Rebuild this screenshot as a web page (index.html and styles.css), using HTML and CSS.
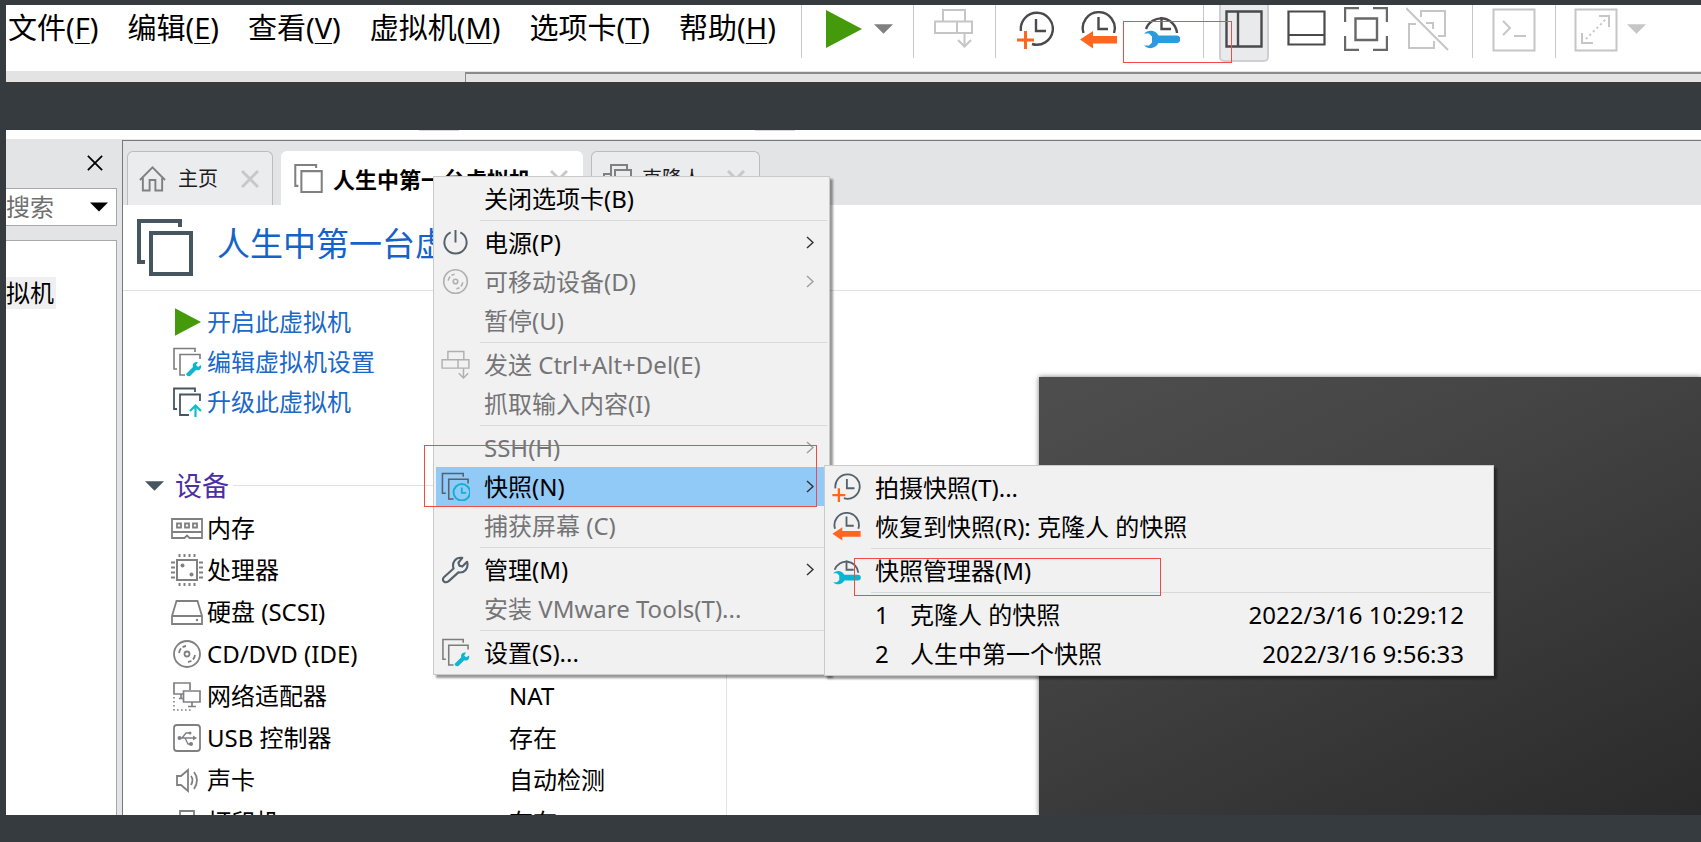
FILE: index.html
```html
<!DOCTYPE html>
<html lang="zh-CN">
<head>
<meta charset="utf-8">
<title>虚拟机快照</title>
<link rel="stylesheet" href="styles.css">
</head>
<body>
<svg class="defs" aria-hidden="true">
  <symbol id="i-play" viewBox="0 0 36 38"><path d="M0 0L36 19L0 38Z" fill="#459a0b"/></symbol>
  <symbol id="i-drop" viewBox="0 0 20 10"><path d="M0 0H20L10 10Z" fill="currentColor"/></symbol>
  <symbol id="i-send" viewBox="0 0 39 40"><g fill="none" stroke="currentColor" stroke-width="2"><path d="M9 13V2H31V13M1 13.500H38V25H1ZM23 13V25M30.500 25V38M24 32L30.500 38.500L37 32"/></g></symbol>
  <symbol id="i-snap-add" viewBox="0 0 37 38"><g fill="none" stroke="currentColor" stroke-width="2.400"><path d="M4 20A16 16 0 1 1 15 33"/><path d="M19 8V20H29"/></g><path d="M0 29H17M8.500 20V38" stroke="#ff671f" stroke-width="3" fill="none"/></symbol>
  <symbol id="i-snap-back" viewBox="0 0 37 38"><g fill="none" stroke="currentColor" stroke-width="2.400"><path d="M3.500 22A16 16 0 1 1 34 22"/><path d="M18.500 6V18H28"/></g><path d="M0 28.500L13 20V25H37V32.500H13V37.500Z" fill="#ff671f"/></symbol>
  <symbol id="i-snap-mgr" viewBox="0 0 37 38"><g fill="none" stroke="currentColor" stroke-width="2.400"><path d="M3 18A16 16 0 0 1 34 22"/><path d="M18.500 6V18H28"/></g><path class="wrench-fill" d="M1 22.500A9 9 0 0 1 15.500 24.500H33.500A3.700 3.700 0 0 1 33.500 32H15.500A9 9 0 0 1 1 34.500H6L9 31.500V25.500L6 22.500Z"/></symbol>
  <symbol id="i-side" viewBox="0 0 38 38"><path d="M1.500 1.500H36.500V36.500H1.500ZM13 1V37" fill="none" stroke="currentColor" stroke-width="2.400"/></symbol>
  <symbol id="i-bottom" viewBox="0 0 39 36"><path d="M1.500 1.500H37.500V34.500H1.500ZM1 25H38" fill="none" stroke="currentColor" stroke-width="2.200"/></symbol>
  <symbol id="i-full" viewBox="0 0 44 44"><path d="M1 15V1H15M29 1H43V15M43 29V43H29M15 43H1V29M11.500 11.500H33V33H11.500Z" fill="none" stroke="currentColor" stroke-width="2.400"/></symbol>
  <symbol id="i-unity" viewBox="0 0 44 44"><path d="M15 10V4H39V29H32M10 17H3V41H28V34M20 16H27V22M0 1L42 43" fill="none" stroke="currentColor" stroke-width="2"/></symbol>
  <symbol id="i-term" viewBox="0 0 44 44"><path d="M1.500 1.500H42.500V42.500H1.500ZM11 13L18 20L11 27M22 28H34" fill="none" stroke="currentColor" stroke-width="2"/></symbol>
  <symbol id="i-stretch" viewBox="0 0 44 44"><path d="M1.500 1.500H42.500V42.500H1.500ZM25 8H35V19M8 25V35H19" fill="none" stroke="currentColor" stroke-width="2"/><path d="M12 31L32 11" stroke="currentColor" stroke-width="2" stroke-dasharray="2 3"/></symbol>
  <symbol id="i-x" viewBox="0 0 18 18"><path d="M1 1L17 17M17 1L1 17" stroke="currentColor" fill="none" stroke-width="var(--w,2)"/></symbol>
  <symbol id="i-home" viewBox="0 0 28 26"><path d="M1 14L14 1L27 14M4 12V25H11V14H17V25H24V12" fill="none" stroke="currentColor" stroke-width="2"/></symbol>
  <symbol id="i-vm" viewBox="0 0 56 57"><path d="M43 8V2H2V43H8M14 14H54V55H14Z" fill="none" stroke="currentColor" stroke-width="4"/></symbol>
  <symbol id="i-clone" viewBox="0 0 29 29"><path d="M8 27V1H24V7M12 6H28V24H12ZM8 10H1V27H12" fill="none" stroke="currentColor" stroke-width="2"/></symbol>
  <symbol id="i-edit" viewBox="0 0 30 30"><path d="M23 5V1.500H2V22H5M28 12V7.500H8V28H13" fill="none" stroke="currentColor" stroke-width="1.600"/><path d="M14 27L21 20C20 17 22 14.500 26 15L24 18L26 20L29 18C30 22 27 24 24 23L18 29Q15 30 14 27Z" fill="#0cb6d0"/></symbol>
  <symbol id="i-upgrade" viewBox="0 0 30 30"><path d="M23 5V1.500H2V22H5M28 14V7.500H8V28H17" fill="none" stroke="currentColor" stroke-width="1.800"/><path d="M23.500 30V19M18 24L23.500 18.500L29 24" fill="none" stroke="#0cc0cc" stroke-width="2.200"/></symbol>
  <symbol id="i-snap" viewBox="0 0 30 30"><path d="M23 5V1.500H1.500V22H5M28 12V7.500H8V28H13" fill="none" stroke="currentColor" stroke-width="1.600"/><circle cx="21.500" cy="21" r="8.500" fill="none" stroke="#12b0d2" stroke-width="2"/><path d="M21.500 16V21.500H26" fill="none" stroke="#12b0d2" stroke-width="1.800"/></symbol>
  <symbol id="i-mem" viewBox="0 0 32 32"><g fill="none" stroke="currentColor" stroke-width="1.800"><path d="M1 7H31V26H18.500L16 23.500L13.500 26H1ZM1 20H31M6 11.500H10V15.500H6ZM14 11.500H18V15.500H14ZM22 11.500H26V15.500H22Z"/></g></symbol>
  <symbol id="i-cpu" viewBox="0 0 32 32"><path d="M6 6H26V26H6Z" fill="none" stroke="currentColor" stroke-width="2"/><path d="M8.500 0V3M13.500 0V3M18.500 0V3M23.500 0V3M8.500 29V32M13.500 29V32M18.500 29V32M23.500 29V32M0 8.500H4M0 13.500H4M0 18.500H4M0 23.500H4M28 8.500H32M28 13.500H32M28 18.500H32M28 23.500H32" stroke="currentColor" stroke-width="2"/><circle cx="11.500" cy="11.500" r="2" fill="currentColor"/><circle cx="20.500" cy="20.500" r="2" fill="currentColor"/></symbol>
  <symbol id="i-disk" viewBox="0 0 32 32"><path d="M1 20L5.500 5H26.500L31 20V28H1ZM1 20H31" fill="none" stroke="currentColor" stroke-width="1.800"/><circle cx="26" cy="24" r="1.200" fill="currentColor"/></symbol>
  <symbol id="i-cd" viewBox="0 0 32 32"><g fill="none" stroke="currentColor" stroke-width="1.800"><circle cx="16" cy="16" r="13"/><circle cx="16" cy="16" r="2.500"/><path d="M8 15Q9 9 15 8M24 17Q23 23 17 24" stroke-dasharray="5 2"/></g></symbol>
  <symbol id="i-net" viewBox="0 0 32 32"><path d="M12 14H3V3H19V10M12.500 11H29V22H12.500ZM21 22V26M17 26.500H25M8 18.500H12M10 14V18" fill="none" stroke="currentColor" stroke-width="1.700"/><path d="M3 17V30H22" fill="none" stroke="currentColor" stroke-width="1.600" stroke-dasharray="1.600 2.400"/></symbol>
  <symbol id="i-usb" viewBox="0 0 32 32"><rect x="3" y="3" width="26" height="26" rx="3" fill="none" stroke="currentColor" stroke-width="1.800"/><path d="M8 16H24M11 16L15 11H18M14 16L17 22H20" fill="none" stroke="currentColor" stroke-width="1.400"/><circle cx="8.500" cy="16" r="2" fill="currentColor"/><circle cx="20" cy="22" r="2" fill="currentColor"/><circle cx="19" cy="11" r="1.500" fill="currentColor"/><path d="M22 13.500L26 16L22 18.500Z" fill="currentColor"/></symbol>
  <symbol id="i-sound" viewBox="0 0 32 32"><path d="M6 12H10L17 6V27L10 21H6ZM20 12Q23 16 20 21M23 8Q29 16 23 25" fill="none" stroke="currentColor" stroke-width="1.800"/></symbol>
  <symbol id="i-print" viewBox="0 0 32 32"><path d="M9 12V5H23V12M3 12H29V23H3ZM9 18H23V29H9Z" fill="none" stroke="currentColor" stroke-width="1.800"/></symbol>
  <symbol id="i-power" viewBox="0 0 30 30"><path d="M10 4.500A11.500 11.500 0 1 0 20 4.500M15 2V15" fill="none" stroke="currentColor" stroke-width="2"/></symbol>
  <symbol id="i-wrench" viewBox="0 0 30 30"><path d="M3 23L13 14C11 8 15 2 22 3L18 8L19 11L22 12L27 7C29 14 24 19 18 18L8 27C4 30 0 26 3 23Z" fill="none" stroke="currentColor" stroke-width="2.200" stroke-linejoin="round"/></symbol>
  <symbol id="i-chev" viewBox="0 0 8 13"><path d="M1 1L7 6.500L1 12" fill="none" stroke="currentColor" stroke-width="1.500"/></symbol>
</svg>

<header class="topbar">
  <div class="topbar-row">
    <nav class="menubar">
      <button>文件(<u>F</u>)</button>
      <button>编辑(<u>E</u>)</button>
      <button>查看(<u>V</u>)</button>
      <button>虚拟机(<u>M</u>)</button>
      <button>选项卡(<u>T</u>)</button>
      <button>帮助(<u>H</u>)</button>
    </nav>
    <div class="tools">
      <div class="group g-play">
        <button aria-label="开启"><svg class="t-play"><use href="#i-play"/></svg></button>
        <button class="mid" aria-label="电源选项"><svg class="t-drop"><use href="#i-drop"/></svg></button>
      </div>
      <div class="group g-send"><button class="off" aria-label="发送"><svg class="t-send"><use href="#i-send"/></svg></button></div>
      <div class="group g-snap">
        <button aria-label="拍摄快照"><svg class="t-snap"><use href="#i-snap-add"/></svg></button>
        <button aria-label="恢复快照"><svg class="t-snap"><use href="#i-snap-back"/></svg></button>
        <button class="blue" aria-label="快照管理器"><svg class="t-snap"><use href="#i-snap-mgr"/></svg></button>
      </div>
      <div class="group g-view">
        <button class="pressed" aria-label="侧栏"><svg class="t-side"><use href="#i-side"/></svg></button>
        <button class="low" aria-label="缩略图栏"><svg class="t-bottom"><use href="#i-bottom"/></svg></button>
        <button class="soft" aria-label="全屏"><svg class="t-box"><use href="#i-full"/></svg></button>
        <button class="off" aria-label="Unity"><svg class="t-box"><use href="#i-unity"/></svg></button>
      </div>
      <div class="group g-term"><button class="off" aria-label="控制台"><svg class="t-box"><use href="#i-term"/></svg></button></div>
      <div class="group g-fit">
        <button class="off" aria-label="拉伸"><svg class="t-box"><use href="#i-stretch"/></svg></button>
        <button class="off" aria-label="拉伸选项"><svg class="t-drop"><use href="#i-drop"/></svg></button>
      </div>
    </div>
  </div>
  <div class="topbar-foot"><div class="foot-edge"></div></div>
  <div class="mark mark-tool"></div>
</header>

<main class="window">
  <div class="window-top"></div>
  <div class="columns">
    <aside class="library">
      <div class="library-head"><button aria-label="关闭库"><svg class="x-thin"><use href="#i-x"/></svg></button></div>
      <div class="search">
        <input type="text" aria-label="搜索" placeholder="搜索">
        <button aria-label="搜索选项"><svg class="s-drop"><use href="#i-drop"/></svg></button>
      </div>
      <div class="tree"><span>拟机</span></div>
    </aside>
    <section class="work">
      <div class="tabs">
        <div class="tab tab-home"><svg class="home"><use href="#i-home"/></svg><span>主页</span><button aria-label="关闭"><svg class="x-tab"><use href="#i-x"/></svg></button></div>
        <div class="tab tab-vm"><svg class="tab-icon"><use href="#i-vm"/></svg><span>人生中第一台虚拟机</span><button aria-label="关闭"><svg class="x-tab"><use href="#i-x"/></svg></button></div>
        <div class="tab tab-clone"><svg class="tab-icon"><use href="#i-clone"/></svg><span>克隆人</span><button aria-label="关闭"><svg class="x-tab"><use href="#i-x"/></svg></button></div>
      </div>
      <div class="title"><svg><use href="#i-vm"/></svg><h1>人生中第一台虚拟机</h1></div>
      <div class="body">
        <div class="details">
          <ul class="actions">
            <li><svg class="a-play"><use href="#i-play"/></svg><a href="#">开启此虚拟机</a></li>
            <li><svg><use href="#i-edit"/></svg><a href="#">编辑虚拟机设置</a></li>
            <li><svg class="slate"><use href="#i-upgrade"/></svg><a href="#">升级此虚拟机</a></li>
          </ul>
          <h2><svg><use href="#i-drop"/></svg>设备</h2>
          <table class="devices">
            <tr><th scope="row"><svg><use href="#i-mem"/></svg>内存</th><td></td></tr>
            <tr><th scope="row"><svg><use href="#i-cpu"/></svg>处理器</th><td></td></tr>
            <tr><th scope="row"><svg><use href="#i-disk"/></svg>硬盘 (SCSI)</th><td></td></tr>
            <tr><th scope="row"><svg><use href="#i-cd"/></svg>CD/DVD (IDE)</th><td></td></tr>
            <tr><th scope="row"><svg><use href="#i-net"/></svg>网络适配器</th><td>NAT</td></tr>
            <tr><th scope="row"><svg><use href="#i-usb"/></svg>USB 控制器</th><td>存在</td></tr>
            <tr><th scope="row"><svg><use href="#i-sound"/></svg>声卡</th><td>自动检测</td></tr>
            <tr><th scope="row"><svg><use href="#i-print"/></svg>打印机</th><td>存在</td></tr>
          </table>
        </div>
        <div class="preview"></div>
      </div>
    </section>
  </div>

  <div class="popup context">
    <button><i></i>关闭选项卡(B)</button>
    <hr>
    <button><i><svg><use href="#i-power"/></svg></i>电源(P)<svg class="chev"><use href="#i-chev"/></svg></button>
    <button disabled><i><svg><use href="#i-cd"/></svg></i>可移动设备(D)<svg class="chev"><use href="#i-chev"/></svg></button>
    <button disabled><i></i>暂停(U)</button>
    <hr>
    <button disabled><i><svg class="bold"><use href="#i-send"/></svg></i>发送 Ctrl+Alt+Del(E)</button>
    <button disabled><i></i>抓取输入内容(I)</button>
    <hr>
    <button disabled><i></i>SSH(H)<svg class="chev"><use href="#i-chev"/></svg></button>
    <button class="active"><i><svg><use href="#i-snap"/></svg></i>快照(N)<svg class="chev"><use href="#i-chev"/></svg></button>
    <button disabled><i></i>捕获屏幕 (C)</button>
    <hr>
    <button><i><svg><use href="#i-wrench"/></svg></i>管理(M)<svg class="chev"><use href="#i-chev"/></svg></button>
    <button disabled><i></i>安装 VMware Tools(T)...</button>
    <hr>
    <button><i><svg class="grey"><use href="#i-edit"/></svg></i>设置(S)...</button>
  </div>

  <div class="popup submenu">
    <button><i><svg><use href="#i-snap-add"/></svg></i>拍摄快照(T)...</button>
    <button><i><svg><use href="#i-snap-back"/></svg></i>恢复到快照(R): 克隆人 的快照</button>
    <hr>
    <button><i><svg><use href="#i-snap-mgr"/></svg></i>快照管理器(M)</button>
    <hr>
    <button><i></i><b>1</b>克隆人 的快照<time>2022/3/16 10:29:12</time></button>
    <button><i></i><b>2</b>人生中第一个快照<time>2022/3/16 9:56:33</time></button>
  </div>
  <div class="mark mark-snap"></div>
  <div class="mark mark-mgr"></div>
</main>
</body>
</html>
```
FILE: styles.css
```css
* { box-sizing: border-box; }
body {
  margin: 0;
  height: 100vh;
  padding: 5px 0 27px 6px;
  display: flex;
  flex-direction: column;
  gap: 48px;
  overflow: hidden;
  background: #363b3f;
  color: #000;
  font: 24px/32px "Noto Sans", "Noto Sans CJK SC", sans-serif;
}
button {
  font: inherit;
  color: inherit;
  background: none;
  border: 0;
  padding: 0;
  text-align: left;
  white-space: nowrap;
}
svg { display: block; flex: none; overflow: visible; }
.defs { position: absolute; width: 0; height: 0; }
.wrench-fill { fill: var(--wrench, #08b5d3); }

/* Menu bar and toolbar */
.topbar { position: relative; flex: none; background: #fff; }
.topbar-row { display: flex; height: 66px; overflow: hidden; }
.menubar {
  flex: none;
  width: 795px;
  padding: 3px 0 0 2px;
  display: flex;
  align-items: flex-start;
  gap: 29px;
  font-size: 29px;
  line-height: 40px;
}
.menubar u { text-decoration-thickness: 1px; text-underline-offset: 4px; }
.tools { display: flex; align-items: flex-start; color: #4a4a4c; }
.group {
  flex: none;
  height: 53px;
  border-left: 1px solid #c8c8ca;
  display: flex;
  align-items: flex-start;
}
.g-play { width: 112px; padding: 5px 0 0 24px; gap: 12px; }
.g-play .mid { padding-top: 14px; }
.g-send { width: 82px; padding: 3px 0 0 20px; }
.g-snap { width: 208px; padding: 6px 0 0 21px; gap: 26px; }
.g-view { width: 269px; padding-left: 15px; gap: 18px; }
.g-view button { padding-top: 2px; }
.g-view .low { padding-top: 5px; }
.g-term { width: 83px; padding: 3px 0 0 19px; }
.g-fit { padding: 3px 0 0 18px; gap: 9px; }
.g-fit button:last-child { padding-top: 16px; }
.mid { color: #808080; }
.off { color: #c6c6c8; }
.soft { color: #68686a; }
.blue { --wrench: #2a9bdc; }
.g-view .pressed {
  padding: 5px 4px 12px;
  background: #e9eaec;
  border: solid #cfcfd2;
  border-width: 0 2px 2px;
  border-radius: 0 0 5px 5px;
}
.t-play { width: 36px; height: 38px; }
.t-drop { width: 19px; height: 10px; }
.t-send { width: 39px; height: 40px; }
.t-snap { width: 37px; height: 38px; }
.t-side { width: 38px; height: 38px; }
.t-bottom { width: 39px; height: 36px; }
.t-box { width: 44px; height: 44px; }
.topbar-foot { height: 11px; background: #e3e3e4; padding: 1px 0 0 459px; }
.foot-edge { height: 10px; border: solid #8a8a8a; border-width: 2px 0 0 1px; }

/* Main window */
.window {
  position: relative;
  flex: 1;
  min-height: 0;
  overflow: hidden;
  display: flex;
  flex-direction: column;
  background: #fff;
}
.window-top {
  flex: none;
  height: 9px;
  background:
    linear-gradient(#d6d6dc, #d6d6dc) 413px 0 / 40px 1px no-repeat,
    linear-gradient(#d6d6dc, #d6d6dc) 749px 0 / 40px 1px no-repeat,
    #fff;
}
.columns { flex: 1; min-height: 0; display: flex; background: #e3e4e6; }
.library { flex: none; width: 111px; display: flex; flex-direction: column; }
.library-head {
  height: 49px;
  display: flex;
  justify-content: flex-end;
  align-items: flex-start;
  padding: 16px 14px 0 0;
}
.x-thin { width: 16px; height: 16px; --w: 2; }
.search {
  height: 38px;
  display: flex;
  align-items: center;
  background: #fff;
  border: solid #a8a8aa;
  border-width: 1px 1px 1px 0;
}
.search input {
  width: 84px;
  border: 0;
  padding: 0;
  background: none;
  font: inherit;
}
.search input::placeholder { color: #707070; opacity: 1; }
.s-drop { width: 18px; height: 10px; }
.tree {
  flex: 1;
  margin-top: 14px;
  padding-top: 36px;
  background: #fff;
  border: solid #a8a8aa;
  border-width: 1px 1px 0 0;
}
.tree span { display: inline-block; padding-right: 2px; background: #f0f0f0; }
.work {
  flex: 1;
  min-width: 0;
  margin: 1px 0 0 5px;
  border: solid #76787a;
  border-width: 1px 0 0 1px;
  display: flex;
  flex-direction: column;
  background: #fff;
}
.tabs {
  flex: none;
  height: 64px;
  padding: 10px 0 0 4px;
  display: flex;
  gap: 8px;
  background: #e3e4e6;
}
.tab {
  display: flex;
  align-items: center;
  background: #ebecee;
  border: 1px solid #bcbcc0;
  border-bottom: 0;
  border-radius: 6px 6px 0 0;
  font-size: 20px;
  color: #808082;
  white-space: nowrap;
}
.tab span { color: #1c1c1c; }
.tab button { margin-left: auto; color: #c8c8ca; }
.tab-home { width: 146px; padding: 0 13px 0 11px; gap: 12px; }
.tab-vm {
  width: 302px;
  padding: 0 14px 0 12px;
  gap: 10px;
  background: #fff;
  border-color: #fff;
  font-size: 22px;
  font-weight: 700;
}
.tab-vm span { color: #000; }
.tab-clone { width: 169px; padding: 0 14px 0 11px; gap: 10px; }
.home { width: 27px; height: 26px; }
.tab-icon { width: 29px; height: 29px; }
.x-tab { width: 18px; height: 18px; --w: 3; }
.title {
  flex: none;
  height: 86px;
  display: flex;
  align-items: center;
  gap: 24px;
  padding-left: 14px;
  border-bottom: 1px solid #e2e2e4;
  color: #465661;
}
.title svg { width: 56px; height: 57px; }
h1 {
  margin: 0;
  padding-bottom: 8px;
  font-size: 33px;
  line-height: 48px;
  font-weight: 400;
  color: #1563c9;
}
.body { flex: 1; min-height: 0; display: flex; }
.details { flex: none; width: 604px; }
.actions { list-style: none; margin: 0; padding: 11px 0 0 49px; color: #7c7c7e; }
.actions li { height: 40px; display: flex; align-items: center; gap: 5px; }
.actions svg { width: 30px; height: 30px; }
.actions .a-play { width: 26px; height: 28px; margin: 0 1px 0 3px; }
.actions .slate { color: #465661; }
.actions a { color: #1a68c8; text-decoration: none; }
h2 {
  margin: 42px 0 0;
  padding-left: 22px;
  display: flex;
  align-items: center;
  font-size: 27px;
  line-height: 43px;
  font-weight: 400;
  color: #4b2fa3;
}
h2 svg { width: 19px; height: 10px; margin-right: 11px; color: #465661; }
h2::after { content: ""; flex: 1; height: 1px; margin-left: 4px; background: #e2e2e4; }
.devices { width: 604px; border-collapse: collapse; border-right: 1px solid #e2e2e4; }
.devices tr { height: 42px; }
.devices th {
  display: flex;
  align-items: center;
  gap: 4px;
  height: 42px;
  width: 386px;
  padding: 0 0 0 48px;
  font-weight: 400;
  white-space: nowrap;
}
.devices svg { width: 32px; height: 32px; color: #808082; }
.devices td { padding: 0; width: 218px; }
.preview {
  flex: 1;
  margin: 86px 0 0 312px;
  background: linear-gradient(155deg, #4e4e4e, #444 35%, #2a2a2a);
  box-shadow: 0 0 5px #777;
}

/* Pop-up menus */
.popup {
  position: absolute;
  background: #f1f1f1;
  border: 1px solid #cacaca;
  padding: 2px;
  display: flex;
  flex-direction: column;
  box-shadow: 3px 3px 2px rgba(0, 0, 0, .4);
}
.context { left: 427px; top: 46px; width: 397px; }
.submenu { left: 818px; top: 335px; width: 670px; }
.popup button { height: 39px; display: flex; align-items: center; padding-right: 13px; }
.popup button:disabled { color: #757577; }
.popup .active { background: #91c9f7; }
.popup i { flex: none; width: 48px; padding-left: 5px; }
.popup i svg { width: 29px; height: 29px; color: #55616b; }
.popup button:disabled i svg { color: #b0b0b2; }
.popup i .bold { stroke-width: 3; }
.popup i .grey { color: #7c7c7e; }
.popup hr { width: auto; height: 1px; border: 0; margin: 2px 0 2px 44px; background: #d8d8d8; }
.chev { width: 8px; height: 13px; margin-left: auto; color: #333; }
.popup button:disabled .chev { color: #a0a0a2; }
.submenu b { font-weight: 400; width: 35px; }
.submenu time { margin-left: auto; padding-right: 14px; }

/* Red call-out frames */
.mark { position: absolute; border: 1px solid #f04a4a; pointer-events: none; }
.mark-tool { left: 1117px; top: 16px; width: 109px; height: 42px; }
.mark-snap { left: 418px; top: 315px; width: 393px; height: 62px; }
.mark-mgr { left: 848px; top: 428px; width: 307px; height: 38px; }
```
